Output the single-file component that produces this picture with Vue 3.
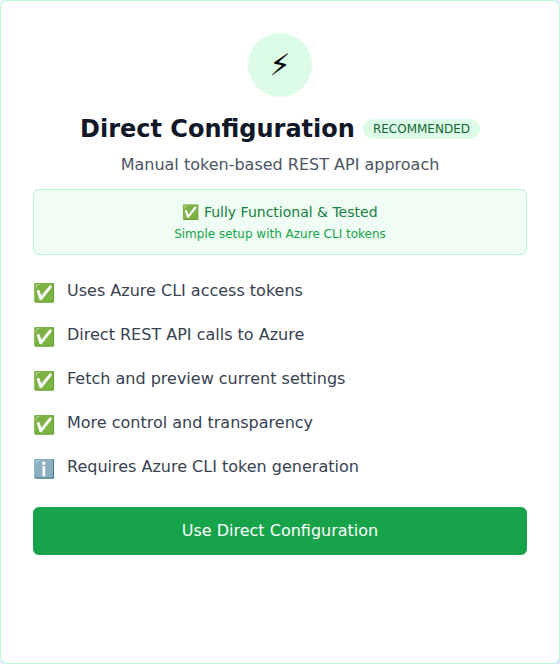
<script setup>
const features = [
  { icon: '✅', text: 'Uses Azure CLI access tokens' },
  { icon: '✅', text: 'Direct REST API calls to Azure' },
  { icon: '✅', text: 'Fetch and preview current settings' },
  { icon: '✅', text: 'More control and transparency' },
  { icon: 'ℹ️', text: 'Requires Azure CLI token generation' },
]
</script>

<template>
  <section class="card">
    <header class="head">
      <div class="badge-icon">⚡</div>
      <div class="title-row">
        <h3 class="title">Direct Configuration</h3>
        <span class="tag">RECOMMENDED</span>
      </div>
      <p class="subtitle">Manual token-based REST API approach</p>
      <div class="status">
        <p class="status-title">✅ Fully Functional &amp; Tested</p>
        <p class="status-note">Simple setup with Azure CLI tokens</p>
      </div>
    </header>
    <ul class="features">
      <li v-for="f in features" :key="f.text">
        <span class="mark">{{ f.icon }}</span>
        <span class="label">{{ f.text }}</span>
      </li>
    </ul>
    <button class="action" type="button">Use Direct Configuration</button>
  </section>
</template>

<style>
body { background: linear-gradient(to bottom right, #eff6ff, #e0e7ff); }
</style>

<style scoped>
.card {
  box-sizing: border-box;
  height: 664px;
  padding: 32px;
  border: 1px solid #bbf7d0;
  border-radius: 8px;
  background: #fff;
  font: 16px/24px "DejaVu Sans", sans-serif;
}
h3, p, ul { margin: 0; padding: 0; }
.head { text-align: center; margin-bottom: 24px; }
.badge-icon {
  display: flex;
  align-items: center;
  justify-content: center;
  width: 64px;
  height: 64px;
  margin: 0 auto 16px;
  border-radius: 50%;
  background: #dcfce7;
  color: #000;
  font-size: 30px;
  line-height: 36px;
}
.title-row { display: flex; align-items: center; justify-content: center; gap: 8px; margin-bottom: 8px; }
.title { color: #111827; font-size: 24px; line-height: 32px; font-weight: 700; }
.tag {
  padding: 2px 10px;
  border-radius: 999px;
  background: #dcfce7;
  color: #166534;
  font-size: 12px;
  line-height: 16px;
  font-weight: 500;
}
.subtitle { color: #4b5563; }
.status { margin-top: 12px; padding: 12px; border: 1px solid #bbf7d0; border-radius: 6px; background: #f0fdf4; }
.status-title { color: #15803d; font-size: 14px; line-height: 20px; font-weight: 500; }
.status-note { margin-top: 4px; color: #16a34a; font-size: 12px; line-height: 16px; }
.features { display: flex; flex-direction: column; gap: 16px; list-style: none; margin-bottom: 24px; }
li { display: flex; align-items: flex-start; height: 28px; }
.mark { margin-right: 12px; color: #22c55e; font-size: 18px; line-height: 28px; }
.label { color: #374151; }
.action {
  display: block;
  width: 100%;
  padding: 12px 24px;
  border: 0;
  border-radius: 6px;
  background: #16a34a;
  color: #fff;
  font: inherit;
  font-weight: 500;
}
</style>
